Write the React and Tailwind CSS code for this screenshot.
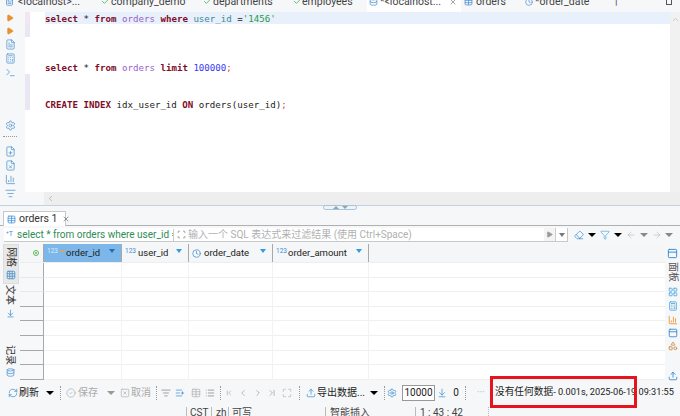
import React from 'react';
import {
  Settings, ChevronLeft, ChevronRight, ChevronUp, X, Check, RefreshCw, Upload, Table, Play, Filter, Eraser,
  ArrowLeft, ArrowRight, CircleCheck, SquareX, ListPlus, List, ChevronFirst, ChevronLast, Clock, FileText, FilePlus, FileX, Terminal, Database, LayoutGrid, BarChart3, Calculator, PanelTop, Shapes, Maximize, Grid3x3, Scan, ArrowDownToLine, ListFilter,
} from 'lucide-react';

const Caret = ({ c = 'border-t-black', w = 'w-[18px]' }) => (
  <span className={`${w} flex justify-center shrink-0`}>
    <span className={`w-0 h-0 border-x-[4px] border-x-transparent border-t-[4px] ${c}`} />
  </span>
);

const Sep = ({ w = 'w-[14px]' }) => (
  <span className={`${w} h-[14px] shrink-0 flex justify-center`}>
    <span className="h-full border-l border-dotted border-[#999]" />
  </span>
);

const Tab = ({ w, children, active }) => (
  <div className={`${w} shrink-0 h-full flex items-center pb-[9px] whitespace-nowrap ${active ? 'bg-white' : ''}`}>{children}</div>
);

const SideIcon = ({ Icon, color = 'text-[#4a90d0]', mb = 'mb-[3px]' }) => (
  <Icon size={11} className={`${color} ${mb} shrink-0`} strokeWidth={1.6} />
);

const Line = ({ children }) => <div className="h-[12.25px] leading-[14px] whitespace-pre">{children}</div>;
const K = ({ children }) => <span className="font-bold text-[#7f0d27]">{children}</span>;
const T = ({ children }) => <span className="text-[#9a5fc9]">{children}</span>;

const HeaderCell = ({ w, active, icon, label, iw = 'w-[14px]' }) => (
  <div className={`${w} shrink-0 h-full flex items-center border-r border-[#a8a8a8] pr-[6px] pl-[3px] ${active ? 'bg-[#7db6e8]' : ''}`}>
    <span className={`${iw} flex items-center text-[6.5px] leading-none -mt-[4px] shrink-0 ${active ? 'text-[#dcecf9]' : 'text-[#3f8fd6]'}`}>
      {icon}
      {active ? <span className="w-[4px] h-[2px] bg-[#e8a04d] ml-[3px]" /> : null}
    </span>
    <span className="flex-1 text-[9.5px] text-[#222] whitespace-nowrap">{label}</span>
    <span className={`w-0 h-0 border-x-[3.5px] border-x-transparent border-t-[4px] -mt-[4px] ${active ? 'border-t-[#1f6fb8]' : 'border-t-[#2d9ce0]'}`} />
  </div>
);

const rowIdx = [0, 1, 2, 3, 4, 5, 6, 7];
const darkLine = [false, false, true, true, true, true, true, true];

const Ti = ({ Icon, color = 'text-[#777]', cls = 'w-[15px]', size = 10 }) => (
  <span className={`${cls} flex justify-center shrink-0`}>
    <Icon size={size} className={color} strokeWidth={1.6} />
  </span>
);

const Vert = ({ children, cls = '' }) => (
  <span className={`[writing-mode:vertical-rl] [text-orientation:sideways] h-[20px] text-[10px] leading-none shrink-0 ${cls}`}>{children}</span>
);

export default function App() {
  return (
    <div className="relative w-[680px] h-[416px] overflow-hidden flex flex-col bg-[#f6f7f8] text-[#333] font-['Roboto','Noto_Sans_CJK_SC',sans-serif]">
      {/* editor tabs */}
      <div className="h-[12px] shrink-0 flex overflow-hidden text-[10.5px] leading-[10px] text-[#444]">
        <Tab w="w-[100px]"><span className="w-[18px] flex justify-center shrink-0"><FileText size={9} className="text-[#4a90d0]" /></span>&lt;localhost&gt;...</Tab>
        <Tab w="w-[103px]"><Check size={9} className="ml-[1px] mr-[1px] text-[#35a853] shrink-0" />company_demo</Tab>
        <Tab w="w-[90px]"><Check size={9} className="mr-[1px] text-[#35a853] shrink-0" />departments</Tab>
        <Tab w="w-[74px]"><Check size={9} className="mr-[0px] text-[#35a853] shrink-0" />employees</Tab>
        <Tab w="w-[94px]" active>
          <span className="w-[13px] flex justify-center shrink-0"><Database size={9} className="text-[#4a90d0]" /></span>
          <span className="w-[69px] shrink-0">*&lt;localhost...</span>
          <X size={8} className="text-[#777] shrink-0" />
        </Tab>
        <Tab w="w-[62px]">
          <span className="w-[15px] flex justify-center shrink-0"><Table size={9} className="text-[#4a90d0]" /></span>orders
        </Tab>
        <Tab w="w-[88px]">
          <span className="w-[12px] flex justify-center shrink-0"><Clock size={8} className="text-[#4a90d0]" /></span>*order_date
        </Tab>
        <Tab w="w-[55px]">↑</Tab>
        <Tab w="w-[14px]"><span className="w-[6px] h-[6px] border border-[#555]" /></Tab>
      </div>

      {/* editor */}
      <div className="h-[180px] shrink-0 flex">
        <div className="w-[25px] shrink-0 flex flex-col items-center pt-[2px] pr-[5px]">
          <Play size={8} className="text-[#e8912d] fill-[#e8912d] mb-[5px] shrink-0" />
          <Play size={8} className="text-[#e8912d] fill-[#e8912d] mb-[4px] shrink-0" />
          <SideIcon Icon={FileText} />
          <SideIcon Icon={Calculator} />
          <SideIcon Icon={Terminal} mb="mb-[42px]" />
          <SideIcon Icon={Settings} mb="mb-[5px]" />
          <span className="w-[14px] border-t border-dotted border-[#999] mb-[9px]" />
          <SideIcon Icon={FilePlus} mb="mb-[3px]" />
          <SideIcon Icon={FileX} />
          <SideIcon Icon={BarChart3} />
          <SideIcon Icon={ListFilter} />
        </div>
        <div className="flex-1 bg-white flex min-w-0">
          <div className="w-[5px] shrink-0 flex flex-col">
            <div className="h-[12px] bg-[#f3e5f1]" />
            <div className="h-[13px] bg-[#e8e7f3]" />
            <div className="h-[37px]" />
            <div className="h-[36px] bg-[#e8e7f3]" />
          </div>
          <div className="w-[15px] shrink-0" />
          <div className="flex-1 font-['DejaVu_Sans_Mono','Liberation_Mono',monospace] text-[9.15px] text-[#222] min-w-0">
            <div className="bg-[#e7f0fb] h-[12.25px] leading-[14px] whitespace-pre"><K>select</K> * <K>from</K> <T>orders</T> <K>where</K> <span className="text-[#3c8b99]">user_id</span> =<span className="text-[#2a9a4a]">'1456'</span></div>
            <Line> </Line><Line> </Line><Line> </Line>
            <Line><K>select</K> * <K>from</K> <T>orders</T> <K>limit</K> <span className="text-[#3a3af0]">100000</span><span className="text-[#e23b3b]">;</span></Line>
            <Line> </Line><Line> </Line>
            <Line><K>CREATE</K> <K>INDEX</K> idx_user_id <K>ON</K> orders(user_id)<span className="text-[#e23b3b]">;</span></Line>
          </div>
          <div className="w-[10px] shrink-0 bg-[#f1f1f1] flex justify-center pt-[3px]"><ChevronUp size={9} className="text-[#bbb]" /></div>
        </div>
      </div>

      {/* editor hscroll */}
      <div className="h-[13px] shrink-0 flex">
        <div className="w-[44px] shrink-0" />
        <div className="flex-1 bg-[#eeeeee] flex items-center pl-[2px]"><ChevronLeft size={9} className="text-[#aaa]" /></div>
      </div>

      {/* sash */}
      <div className="h-[5px] shrink-0 flex items-center justify-center border-t border-[#c3d2e0]">
        <div className="w-[34px] h-[5px] -mt-[1px] rounded-sm border border-[#a9c3dd] bg-[#eef3f8] flex items-center justify-center gap-[3px]">
          <span className="w-0 h-0 border-x-[3px] border-x-transparent border-b-[3px] border-b-[#8aa]" />
          <span className="w-0 h-0 border-x-[3px] border-x-transparent border-t-[3px] border-t-[#8aa]" />
        </div>
      </div>

      {/* results tab */}
      <div className="h-[16px] shrink-0 flex items-end border-b border-[#b0b0b0] pl-[3px]">
        <div className="w-[63px] h-[15px] -mb-px bg-white border-x border-t border-[#c8c8c8] flex items-center text-[10.5px] text-[#333] pl-[3px] whitespace-nowrap">
          <Table size={9} className="text-[#3f8fd6] mr-[3px] shrink-0" />orders 1
          <X size={8} className="text-[#666] ml-[5px] shrink-0" />
        </div>
      </div>

      {/* filter */}
      <div className="h-[18px] shrink-0 flex items-center pl-[4px]">
        <div className="w-[564px] h-[14px] shrink-0 bg-white border-b border-r border-[#c8c8c8] flex items-center text-[10px]">
          <span className="w-[13px] text-[7px] text-[#3f8fd6] pl-[2px] shrink-0">⁺T</span>
          <span className="w-[156px] shrink-0 text-[#2e8b57] whitespace-nowrap overflow-hidden">select * from orders where user_id ='1</span>
          <span className="h-[12px] border-l border-[#ccc] shrink-0" />
          <Ti Icon={Scan} cls="w-[14px]" size={9} color="text-[#666]" />
          <span className="text-[#b0b0b0] flex-1 whitespace-nowrap">输入一个 SQL 表达式来过滤结果 (使用 Ctrl+Space)</span>
          <span className="w-[11px] h-full bg-[#f4f4f4] flex items-center justify-center"><Play size={7} className="text-[#999] fill-[#999]" /></span>
          <span className="w-[12px] h-full flex items-center justify-center border-l border-[#ccc]"><span className="w-0 h-0 border-x-[3.5px] border-x-transparent border-t-[4px] border-t-[#777]" /></span>
        </div>
        <span className="w-[5px] shrink-0" />
        <Ti Icon={Eraser} cls="w-[12px]" color="text-[#2e86d0]" />
        <Caret w="w-[13px]" />
        <Ti Icon={Filter} cls="w-[13px]" color="text-[#4aa3e0]" />
        <Caret w="w-[13px]" />
        <Ti Icon={ArrowLeft} cls="w-[13px]" color="text-[#c0c0c0]" />
        <Caret c="border-t-[#888]" w="w-[13px]" />
        <Ti Icon={ArrowRight} cls="w-[13px]" color="text-[#c0c0c0]" />
        <Caret c="border-t-[#888]" w="w-[12px]" />
      </div>

      {/* grid region */}
      <div className="h-[136px] shrink-0 flex">
        <div className="w-[20px] shrink-0 flex flex-col items-center text-[#333] pt-[1px]">
          <div className="w-[14px] h-[38px] bg-[#e8e8e8] flex flex-col items-center pt-[2px] ml-[2px] shadow-[0_0_0_1px_#ddd] shrink-0">
            <Vert cls="h-[21px]">网格</Vert>
            <Grid3x3 size={10} className="text-[#4a90d0] mt-[2px]" />
          </div>
          <Vert cls="mt-[2px]">文本</Vert>
          <ArrowDownToLine size={9} className="text-[#4a90d0] mt-[4px] shrink-0" />
          <Vert cls="mt-[27px]">记录</Vert>
          <Database size={9} className="text-[#4a90d0] mt-[3px] shrink-0" />
        </div>
        <div className="flex-1 flex flex-col bg-white min-w-0">
          <div className="h-[19px] shrink-0 flex bg-[#f5f6f7] border-b border-[#eee]">
            <div className="w-[24px] shrink-0 flex items-center justify-end pr-[4px] border-r border-[#a8a8a8]">
              <span className="w-[6px] h-[6px] rounded-full border border-[#5cb85c] flex items-center justify-center"><span className="w-[2px] h-[2px] rounded-full bg-[#5cb85c]" /></span>
            </div>
            <HeaderCell w="w-[78px]" active icon="123" label="order_id" iw="w-[19px]" />
            <HeaderCell w="w-[67px]" icon="123" label="user_id" iw="w-[13px]" />
            <div className="w-[84px] shrink-0 h-full flex items-center border-r border-[#a8a8a8] pr-[6px] pl-[3px]">
              <Clock size={9} className="text-[#3f8fd6] mr-[3px] shrink-0" />
              <span className="flex-1 text-[9.5px] text-[#222]">order_date</span>
              <span className="w-0 h-0 border-x-[3.5px] border-x-transparent border-t-[4px] -mt-[4px] border-t-[#2d9ce0]" />
            </div>
            <HeaderCell w="w-[96px]" icon="123" label="order_amount" iw="w-[12px]" />
          </div>
          {rowIdx.map((i) => (
            <div key={i} className="h-[14.6px] shrink-0 flex border-b border-[#f0f0f0]">
              <div className={`w-[24px] shrink-0 border-r border-r-[#a8a8a8] border-b -mb-px ${darkLine[i] ? 'border-b-[#a8a8a8]' : 'border-b-[#e8e8e8]'} bg-[#f7f8f9]`} />
              <div className="w-[78px] shrink-0 border-r border-[#f2f2f2]" />
              <div className="w-[67px] shrink-0 border-r border-[#f2f2f2]" />
              <div className="w-[84px] shrink-0 border-r border-[#f2f2f2]" />
              <div className="w-[96px] shrink-0 border-r border-[#f2f2f2]" />
            </div>
          ))}
        </div>
        <div className="w-[15px] shrink-0 flex flex-col items-center pt-[4px] text-[#555]">
          <PanelTop size={11} className="text-[#2e86d0] shrink-0" />
          <Vert cls="mt-[3px]">面板</Vert>
          <LayoutGrid size={10} className="text-[#4aa3e0] mt-[5px] shrink-0" />
          <Calculator size={10} className="text-[#4aa3e0] mt-[4px] shrink-0" />
          <BarChart3 size={10} className="text-[#e8912d] mt-[4px] shrink-0" />
          <PanelTop size={10} className="text-[#2e86d0] mt-[3px] shrink-0" />
          <Shapes size={10} className="text-[#c9853f] mt-[3px] shrink-0" />
          <Upload size={10} className="text-[#2e86d0] mt-[20px] shrink-0" />
        </div>
      </div>

      {/* toolbar */}
      <div className="h-[25px] shrink-0 flex items-center text-[10px] pl-[7px] whitespace-nowrap">
        <Ti Icon={RefreshCw} cls="w-[12px]" color="text-[#2e86d0]" />
        <span className="w-[24px] shrink-0 text-[#222]">刷新</span>
        <Caret w="w-[14px]" />
        <Sep w="w-[6px]" />
        <Ti Icon={CircleCheck} cls="w-[15px]" color="text-[#aaa]" />
        <span className="w-[26px] shrink-0 text-[#aaa]">保存</span>
        <Caret c="border-t-[#999]" w="w-[14px]" />
        <Ti Icon={SquareX} cls="w-[13px]" color="text-[#aaa]" />
        <span className="w-[21px] shrink-0 text-[#aaa]">取消</span>
        <Sep w="w-[8px]" />
        <Ti Icon={ListFilter} cls="w-[12px]" />
        <Ti Icon={ListPlus} cls="w-[15px]" color="text-[#2e86d0]" />
        <Ti Icon={Table} cls="w-[18px]" color="text-[#aaa]" />
        <Ti Icon={List} cls="w-[10px]" />
        <Sep w="w-[10px]" />
        <Ti Icon={ChevronFirst} cls="w-[8px]" color="text-[#999]" />
        <Ti Icon={ChevronLeft} cls="w-[20px]" color="text-[#999]" />
        <Ti Icon={ChevronRight} cls="w-[10px]" color="text-[#999]" />
        <Ti Icon={ChevronLast} cls="w-[18px]" color="text-[#999]" />
        <Ti Icon={Maximize} cls="w-[12px]" color="text-[#aaa]" />
        <Sep w="w-[12px]" />
        <Ti Icon={Upload} cls="w-[12px]" color="text-[#2e86d0]" />
        <span className="w-[49px] shrink-0 text-[#222]">导出数据...</span>
        <Caret w="w-[16px]" />
        <Sep w="w-[4px]" />
        <Ti Icon={Settings} cls="w-[12px]" color="text-[#2e86d0]" />
        <span className="w-[33px] h-[16px] shrink-0 bg-white border border-[#999] text-[10px] leading-[14px] text-center text-[#222] ml-[4px]">10000</span>
        <Ti Icon={ArrowDownToLine} cls="w-[14px]" color="text-[#2e86d0]" />
        <span className="w-[14px] shrink-0 text-center text-[#222]">0</span>
        <Sep w="w-[4px]" />
        <span className="w-[28px] shrink-0 text-[#bbb] text-center">···</span>
        <span className="shrink-0 text-[#222] text-[9.7px]">没有任何数据<span className="text-[9.2px]">- 0.001s, 2025-06-19 09:31:55</span></span>
      </div>

      {/* status bar */}
      <div className="flex-1 flex text-[10px] leading-[11px] text-[#444] overflow-hidden items-start pt-[2px] pl-[186px]">
        <span className="w-[25px] h-full border-l border-[#bbb] pl-[3px]">CST</span>
        <span className="w-[17px] h-full border-l border-[#bbb] pl-[4px]">zh</span>
        <span className="w-[97px] h-full border-l border-[#bbb] pl-[3px]">可写</span>
        <span className="w-[90px] h-full border-l border-[#bbb] pl-[4px]">智能插入</span>
        <span className="w-[73px] h-full border-l border-[#bbb] pl-[4px]">1 : 43 : 42</span>
        <span className="h-full border-l border-dotted border-[#bbb]" />
      </div>

      {/* annotation */}
      <div className="absolute left-[490px] top-[376px] w-[147px] h-[32px] border-[3px] border-[#e6141e] pointer-events-none" />
    </div>
  );
}
